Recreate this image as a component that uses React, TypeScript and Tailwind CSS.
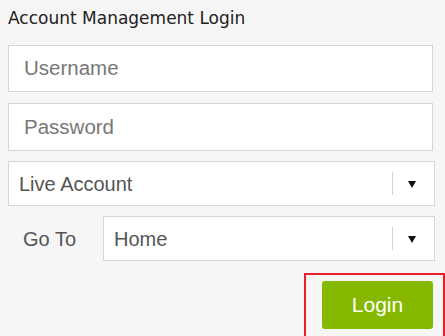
import React from "react";

function Arrow() {
  return (
    <div className="flex items-center h-full">
      <div className="w-px h-[23px] bg-[#d4d4d4]" />
      <svg width="8" height="8" viewBox="0 0 8 8" className="ml-[15px] mr-[18px]">
        <polygon points="0,1 8,1 4,8" fill="#111" />
      </svg>
    </div>
  );
}

export default function App() {
  return (
    <div className="w-[445px] h-[336px] bg-[#f6f6f6] overflow-hidden" style={{ fontFamily: "'Liberation Sans', Arial, sans-serif" }}>
      <div className="pl-2 pt-[7px]">
        <div className="text-[17px] leading-[22px] text-[#222]" style={{ fontFamily: "'DejaVu Sans', sans-serif", letterSpacing: "0px" }}>
          Account Management Login
        </div>
        <div className="mt-[16px] w-[425px] h-[47px] bg-white border border-[#d6d6d6] flex items-center pl-[15px] text-[20.5px] text-[#777]">
          Username
        </div>
        <div className="mt-[11px] w-[425px] h-[48px] bg-white border border-[#d6d6d6] flex items-center pl-[15px] text-[20.5px] text-[#777]">
          Password
        </div>
        <div className="mt-[10px] w-[427px] h-[45px] bg-white border border-[#d6d6d6] flex items-center justify-between pl-[10px] text-[20px] text-[#555]">
          <span>Live Account</span>
          <Arrow />
        </div>
        <div className="mt-[10px] flex items-center h-[45px]">
          <div className="w-[95px] pl-[15px] text-[20px] text-[#555]">Go To</div>
          <div className="w-[332px] h-[45px] bg-white border border-[#d6d6d6] flex items-center justify-between pl-[10px] text-[20px] text-[#555]">
            <span>Home</span>
            <Arrow />
          </div>
        </div>
        <div className="mt-[12px] flex justify-end">
          <div className="w-[141px] h-[70px] border-2 border-[#e8202a] flex justify-end items-start pt-[6px] pr-[10px]">
            <div className="w-[111px] h-[48px] bg-[#86b800] rounded-[3px] flex items-center justify-center text-white text-[21px]">
              Login
            </div>
          </div>
        </div>
      </div>
    </div>
  );
}
